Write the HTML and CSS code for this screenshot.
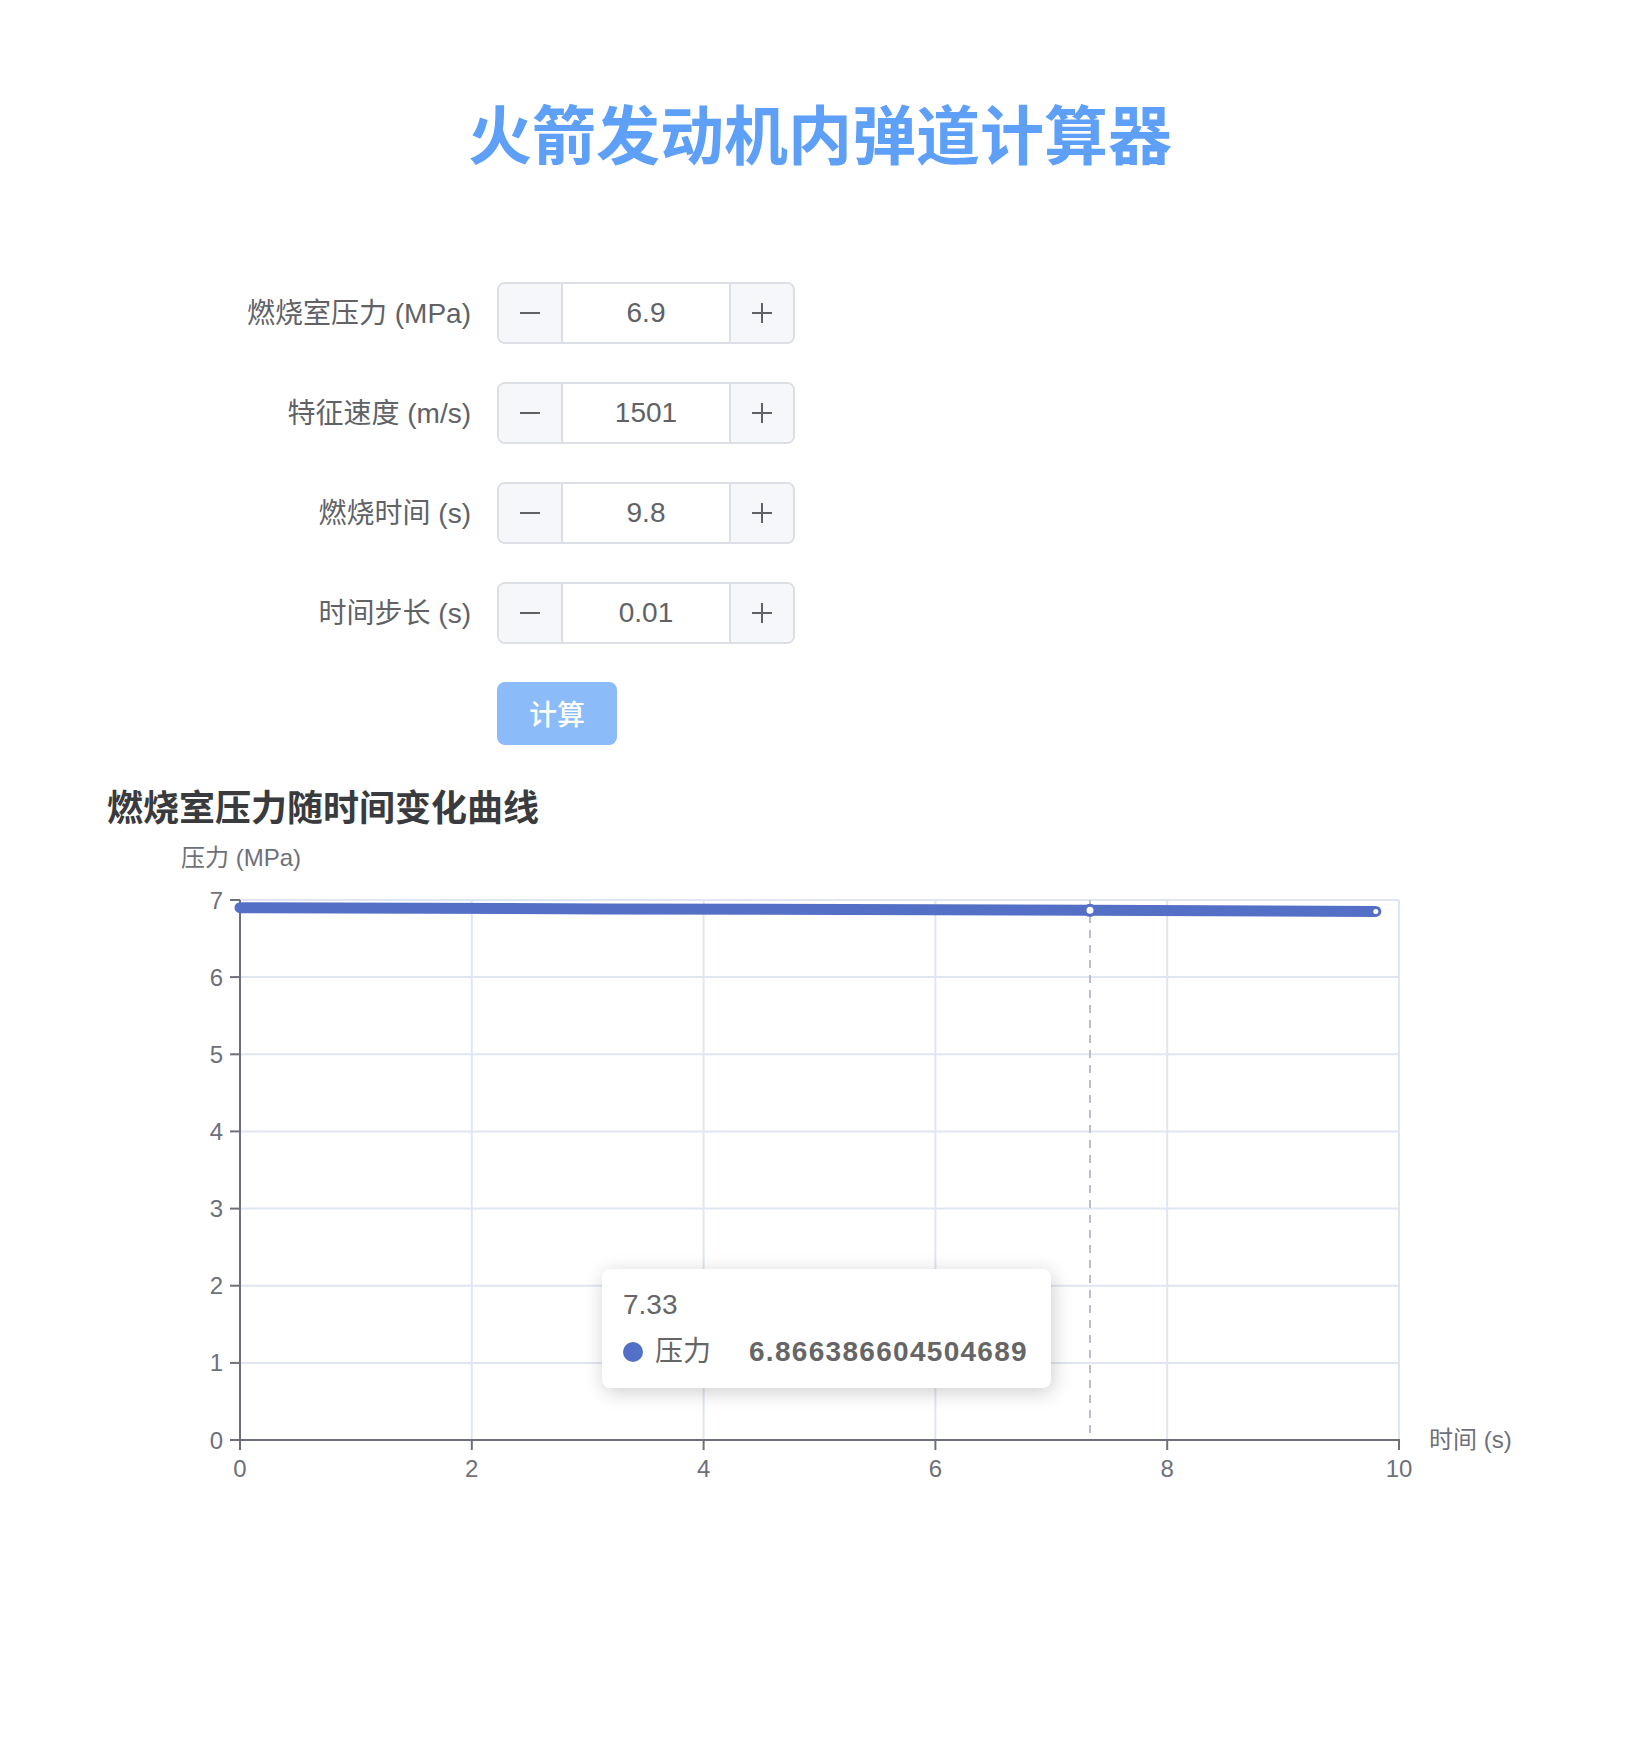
FILE: index.html
```html
<!DOCTYPE html>
<html lang="zh-CN">
<head>
<meta charset="utf-8">
<title>火箭发动机内弹道计算器</title>
<link rel="stylesheet" href="styles.css">
</head>
<body>
<div class="app">
  <h1 class="title">火箭发动机内弹道计算器</h1>

  <form class="form">
    <div class="row">
      <label class="label">燃烧室压力 (MPa)</label>
      <div class="num">
        <span class="step"><svg class="ico" viewBox="0 0 22 22"><line x1="1" y1="11" x2="21" y2="11"/></svg></span>
        <span class="val">6.9</span>
        <span class="step plus"><svg class="ico" viewBox="0 0 22 22"><line x1="1" y1="11" x2="21" y2="11"/><line x1="11" y1="1" x2="11" y2="21"/></svg></span>
      </div>
    </div>
    <div class="row">
      <label class="label">特征速度 (m/s)</label>
      <div class="num">
        <span class="step"><svg class="ico" viewBox="0 0 22 22"><line x1="1" y1="11" x2="21" y2="11"/></svg></span>
        <span class="val">1501</span>
        <span class="step plus"><svg class="ico" viewBox="0 0 22 22"><line x1="1" y1="11" x2="21" y2="11"/><line x1="11" y1="1" x2="11" y2="21"/></svg></span>
      </div>
    </div>
    <div class="row">
      <label class="label">燃烧时间 (s)</label>
      <div class="num">
        <span class="step"><svg class="ico" viewBox="0 0 22 22"><line x1="1" y1="11" x2="21" y2="11"/></svg></span>
        <span class="val">9.8</span>
        <span class="step plus"><svg class="ico" viewBox="0 0 22 22"><line x1="1" y1="11" x2="21" y2="11"/><line x1="11" y1="1" x2="11" y2="21"/></svg></span>
      </div>
    </div>
    <div class="row">
      <label class="label">时间步长 (s)</label>
      <div class="num">
        <span class="step"><svg class="ico" viewBox="0 0 22 22"><line x1="1" y1="11" x2="21" y2="11"/></svg></span>
        <span class="val">0.01</span>
        <span class="step plus"><svg class="ico" viewBox="0 0 22 22"><line x1="1" y1="11" x2="21" y2="11"/><line x1="11" y1="1" x2="11" y2="21"/></svg></span>
      </div>
    </div>
    <div class="row">
      <span class="label"></span>
      <button type="button" class="btn">计算</button>
    </div>
  </form>

  <h2 class="chart-title">燃烧室压力随时间变化曲线</h2>

  <div class="chart">
    <svg class="plot" width="1426" height="660" viewBox="0 0 1426 660">
      <g class="grid">
        <line x1="133" y1="60" x2="1292" y2="60"/>
        <line x1="133" y1="137.1" x2="1292" y2="137.1"/>
        <line x1="133" y1="214.3" x2="1292" y2="214.3"/>
        <line x1="133" y1="291.4" x2="1292" y2="291.4"/>
        <line x1="133" y1="368.6" x2="1292" y2="368.6"/>
        <line x1="133" y1="445.7" x2="1292" y2="445.7"/>
        <line x1="133" y1="522.9" x2="1292" y2="522.9"/>
        <line x1="364.8" y1="60" x2="364.8" y2="600"/>
        <line x1="596.6" y1="60" x2="596.6" y2="600"/>
        <line x1="828.4" y1="60" x2="828.4" y2="600"/>
        <line x1="1060.2" y1="60" x2="1060.2" y2="600"/>
        <line x1="1292" y1="60" x2="1292" y2="600"/>
      </g>
      <g class="axis">
        <line x1="133" y1="60" x2="133" y2="601"/>
        <line x1="132" y1="600" x2="1293" y2="600"/>
        <line x1="123" y1="60" x2="133" y2="60"/>
        <line x1="123" y1="137.1" x2="133" y2="137.1"/>
        <line x1="123" y1="214.3" x2="133" y2="214.3"/>
        <line x1="123" y1="291.4" x2="133" y2="291.4"/>
        <line x1="123" y1="368.6" x2="133" y2="368.6"/>
        <line x1="123" y1="445.7" x2="133" y2="445.7"/>
        <line x1="123" y1="522.9" x2="133" y2="522.9"/>
        <line x1="123" y1="600" x2="133" y2="600"/>
        <line x1="133" y1="600" x2="133" y2="610"/>
        <line x1="364.8" y1="600" x2="364.8" y2="610"/>
        <line x1="596.6" y1="600" x2="596.6" y2="610"/>
        <line x1="828.4" y1="600" x2="828.4" y2="610"/>
        <line x1="1060.2" y1="600" x2="1060.2" y2="610"/>
        <line x1="1292" y1="600" x2="1292" y2="610"/>
      </g>
      <g class="ylab">
        <text x="116" y="60">7</text>
        <text x="116" y="137.1">6</text>
        <text x="116" y="214.3">5</text>
        <text x="116" y="291.4">4</text>
        <text x="116" y="368.6">3</text>
        <text x="116" y="445.7">2</text>
        <text x="116" y="522.9">1</text>
        <text x="116" y="600">0</text>
      </g>
      <g class="xlab">
        <text x="133" y="628">0</text>
        <text x="364.8" y="628">2</text>
        <text x="596.6" y="628">4</text>
        <text x="828.4" y="628">6</text>
        <text x="1060.2" y="628">8</text>
        <text x="1292" y="628">10</text>
      </g>
      <text class="yname" x="134" y="17">压力 (MPa)</text>
      <text class="xname" x="1322" y="599">时间 (s)</text>
      <line class="pointer" x1="983" y1="60" x2="983" y2="600"/>
      <polyline class="series" points="133,67.7 500,68.9 983,70.3 1268.8,71.4"/>
      <circle class="end-dot" cx="1268.8" cy="71.4" r="2.5"/>
      <circle class="hover-dot" cx="983" cy="70.3" r="5"/>
    </svg>
    <div class="tooltip">
      <div class="tt-head">7.33</div>
      <div class="tt-row">
        <span class="tt-dot"></span>
        <span class="tt-name">压力</span>
        <span class="tt-val">6.866386604504689</span>
      </div>
    </div>
  </div>
</div>
</body>
</html>
```

FILE: styles.css
```css
html, body {
  margin: 0;
  padding: 0;
  background: #ffffff;
}

body {
  font-family: "Liberation Sans", "Noto Sans CJK SC", sans-serif;
  color: #606266;
}

.app {
  padding: 0 107px;
}

.title {
  margin: 99px 0 0;
  font-size: 64px;
  line-height: 77px;
  font-weight: 700;
  text-align: center;
  color: #5e9ff8;
}

.form {
  margin: 106px 0 0;
}

.row {
  display: flex;
  align-items: center;
  height: 62px;
  margin-bottom: 38px;
}

.row:last-child {
  margin-bottom: 0;
}

.label {
  flex: 0 0 390px;
  box-sizing: border-box;
  padding-right: 26px;
  padding-bottom: 4px;
  text-align: right;
  font-size: 28px;
  color: #606266;
}

.num {
  display: flex;
  width: 298px;
  height: 62px;
  box-sizing: border-box;
  border: 2px solid #dcdfe6;
  border-radius: 8px;
  overflow: hidden;
  background: #ffffff;
}

.step {
  flex: 0 0 64px;
  display: flex;
  align-items: center;
  justify-content: center;
  background: #f5f7fa;
  border-right: 2px solid #dcdfe6;
  box-sizing: border-box;
}

.step.plus {
  border-right: 0;
  border-left: 2px solid #dcdfe6;
}

.ico {
  width: 22px;
  height: 22px;
  stroke: #606266;
  stroke-width: 2;
  fill: none;
}

.val {
  flex: 1;
  display: flex;
  align-items: center;
  justify-content: center;
  font-size: 28px;
  color: #606266;
}

.btn {
  width: 120px;
  height: 63px;
  border: 0;
  border-radius: 8px;
  background: #8bbbf9;
  color: #ffffff;
  font-family: "Liberation Sans", "Noto Sans CJK SC", sans-serif;
  font-size: 28px;
  font-weight: 500;
  padding: 0;
}

.chart-title {
  margin: 41px 0 11px;
  padding-top: 2px;
  font-size: 36px;
  line-height: 44px;
  font-weight: 700;
  color: #3a3b3e;
}

.chart {
  position: relative;
  width: 1426px;
  height: 660px;
  margin-top: -2px;
}

.plot {
  display: block;
  font-family: "Liberation Sans", "Noto Sans CJK SC", sans-serif;
}

.grid line {
  stroke: #e0e6f1;
  stroke-width: 2;
}

.axis line {
  stroke: #6e7079;
  stroke-width: 2;
}

.ylab text {
  font-size: 24px;
  fill: #6e7079;
  text-anchor: end;
  dominant-baseline: central;
}

.xlab text {
  font-size: 24px;
  fill: #6e7079;
  text-anchor: middle;
  dominant-baseline: central;
}

.yname {
  font-size: 24px;
  fill: #6e7079;
  text-anchor: middle;
  dominant-baseline: central;
}

.xname {
  font-size: 24px;
  fill: #6e7079;
  text-anchor: start;
  dominant-baseline: central;
}

.pointer {
  stroke: #b9bec9;
  stroke-width: 2;
  stroke-dasharray: 8 7;
}

.series {
  fill: none;
  stroke: #5470c6;
  stroke-width: 11;
  stroke-linecap: round;
  stroke-linejoin: round;
}

.end-dot {
  fill: #ffffff;
}

.hover-dot {
  fill: #ffffff;
  stroke: #5470c6;
  stroke-width: 3;
}

.tooltip {
  position: absolute;
  left: 495px;
  top: 429px;
  width: 449px;
  height: 119px;
  box-sizing: border-box;
  padding: 22px 23px 0 21px;
  background: #ffffff;
  border-radius: 8px;
  box-shadow: rgba(0, 0, 0, 0.2) 2px 4px 20px;
  color: #666666;
  font-size: 28px;
}

.tt-head {
  line-height: 28px;
  height: 28px;
}

.tt-row {
  display: flex;
  align-items: center;
  margin-top: 19px;
  line-height: 28px;
  height: 28px;
}

.tt-dot {
  width: 20px;
  height: 20px;
  border-radius: 50%;
  background: #5470c6;
  margin-right: 12px;
}

.tt-name {
  color: #666666;
}

.tt-val {
  margin-left: auto;
  font-weight: 700;
  letter-spacing: 1.3px;
  color: #666666;
}
```
